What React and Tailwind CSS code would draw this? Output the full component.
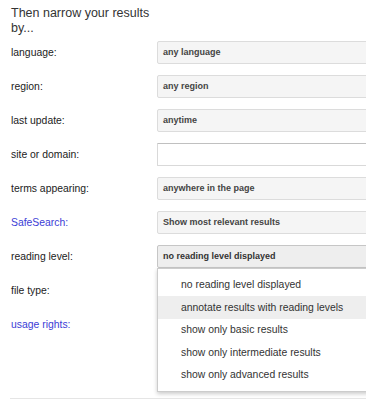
const rows = [
  { label: 'language:', value: 'any language' },
  { label: 'region:', value: 'any region' },
  { label: 'last update:', value: 'anytime' },
  { label: 'site or domain:', input: true },
  { label: 'terms appearing:', value: 'anywhere in the page' },
  { label: 'SafeSearch:', value: 'Show most relevant results', link: true },
  { label: 'reading level:', value: 'no reading level displayed', open: true },
  { label: 'file type:', hidden: true },
  { label: 'usage rights:', hidden: true, link: true },
]

const options = [
  'no reading level displayed',
  'annotate results with reading levels',
  'show only basic results',
  'show only intermediate results',
  'show only advanced results',
]

function Field({ row }) {
  if (row.input) {
    return (
      <div className="h-[23px] w-[240px] shrink-0 bg-white border border-[#d9d9d9] border-t-[#c0c0c0] rounded-[1px]"></div>
    )
  }
  if (row.open) {
    return (
      <div className="relative shrink-0">
        <div className="h-[23px] w-[240px] bg-[#eeeeee] border border-[#c6c6c6] rounded-[2px] pl-[5px] flex items-center text-[9px] font-bold text-[#333]">
          {row.value}
        </div>
        <div className="absolute left-0 top-full w-[240px] bg-white border border-[#cccccc] shadow-[0_2px_4px_rgba(0,0,0,0.2)] py-[5px] z-10">
          {options.map((o, i) => (
            <div
              key={o}
              className={`h-[22.4px] pl-[23px] flex items-center text-[10.4px] text-[#333] ${i === 1 ? 'bg-[#eeeeee]' : ''}`}
            >
              {o}
            </div>
          ))}
        </div>
      </div>
    )
  }
  if (row.hidden) return <div className="h-[23px]"></div>
  return (
    <div className="h-[23px] w-[240px] shrink-0 bg-[#f5f5f5] border border-[#dcdcdc] rounded-[2px] pl-[5px] flex items-center text-[9px] font-bold text-[#444]">
      {row.value}
    </div>
  )
}

export default function App() {
  return (
    <div className="w-[366px] h-[400px] overflow-hidden bg-white font-['Arial','Liberation_Sans',sans-serif]">
      <div className="pl-[11px] pt-[6px]">
        <h3 className="w-[145px] text-[12.5px] leading-[15px] text-[#333]">Then narrow your results by...</h3>
        <div className="mt-[5px] flex flex-col gap-[11px]">
          {rows.map((row) => (
            <div key={row.label} className="flex items-center">
              <div className={`w-[146px] shrink-0 text-[10.4px] ${row.link ? 'text-[#3c3cd6]' : 'text-[#222]'}`}>
                {row.label}
              </div>
              <Field row={row} />
            </div>
          ))}
        </div>
        <div className="mt-[62px] -ml-[1px] border-t border-[#e5e5e5]"></div>
      </div>
    </div>
  )
}
